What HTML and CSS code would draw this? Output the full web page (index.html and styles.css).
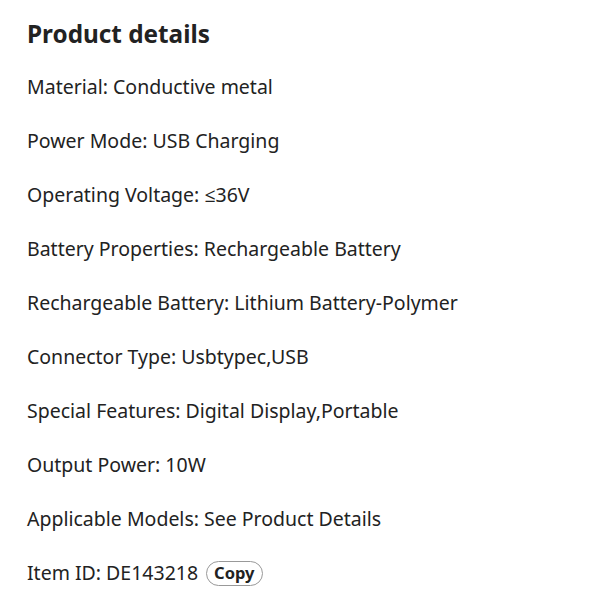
FILE: index.html
```html
<!DOCTYPE html>
<html>
<head>
<meta charset="utf-8">
<link rel="stylesheet" href="styles.css">
</head>
<body>
<section class="details">
  <h2 class="title">Product details</h2>
  <ul class="list">
    <li class="row">Material: Conductive metal</li>
    <li class="row">Power Mode: USB Charging</li>
    <li class="row">Operating Voltage: ≤36V</li>
    <li class="row">Battery Properties: Rechargeable Battery</li>
    <li class="row">Rechargeable Battery: Lithium Battery-Polymer</li>
    <li class="row">Connector Type: Usbtypec,USB</li>
    <li class="row">Special Features: Digital Display,Portable</li>
    <li class="row">Output Power: 10W</li>
    <li class="row">Applicable Models: See Product Details</li>
    <li class="row">Item ID: DE143218 <button class="copy">Copy</button></li>
  </ul>
</section>
</body>
</html>
```
FILE: styles.css
```css
html, body {
  margin: 0;
  padding: 0;
  background: #fff;
}
body {
  font-family: "Noto Sans", "Open Sans", sans-serif;
  color: #222;
}
.details {
  padding: 16px 27px;
}
.title {
  margin: 0 0 8px;
  font-size: 24.3px;
  font-weight: 700;
  line-height: 36px;
  color: #222;
}
.list {
  list-style: none;
  margin: 0;
  padding: 0;
}
.row {
  font-size: 19.5px;
  line-height: 54px;
  display: flex;
  align-items: center;
  gap: 8px;
}
.copy {
  font-family: inherit;
  font-size: 16.5px;
  font-weight: 700;
  color: #222;
  background: #fff;
  border: 1px solid #999;
  border-radius: 13px;
  padding: 0 7px;
  height: 25px;
  line-height: 22px;
}
```
